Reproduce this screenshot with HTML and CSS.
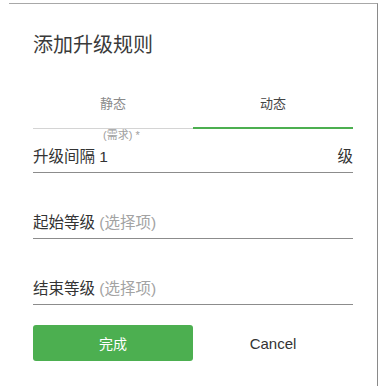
FILE: index.html
```html
<!DOCTYPE html>
<html lang="zh">
<head>
<meta charset="utf-8">
<link rel="stylesheet" href="styles.css">
</head>
<body>
<div class="dialog">
  <h1 class="title">添加升级规则</h1>
  <div class="tabs">
    <div class="tab">静态</div>
    <div class="tab active">动态</div>
  </div>
  <div class="field first">
    <div class="float-label">(需求) *</div>
    <div class="input"><span>升级间隔 1</span><span>级</span></div>
  </div>
  <div class="field second">
    <div class="input"><span>起始等级 <span class="ph">(选择项)</span></span></div>
  </div>
  <div class="field third">
    <div class="input"><span>结束等级 <span class="ph">(选择项)</span></span></div>
  </div>
  <div class="actions">
    <button class="btn primary">完成</button>
    <button class="btn plain">Cancel</button>
  </div>
</div>
</body>
</html>
```
FILE: styles.css
```css
html, body {
  margin: 0;
  padding: 0;
  background: #fff;
}
body {
  font-family: "Liberation Sans", "Noto Sans CJK SC", sans-serif;
  color: #333;
}
.dialog {
  box-sizing: border-box;
  margin: 3px 0 0 9px;
  width: 369px;
  height: 383px;
  border-top: 1px solid #a8a8a8;
  border-right: 1px solid #8a8a8a;
  padding: 27px 24px 0 24px;
}
.title {
  margin: 0;
  font-weight: normal;
  font-size: 20px;
  line-height: 28px;
  color: #3a3a3a;
}
.tabs {
  margin-top: 21px;
  display: flex;
  align-items: flex-end;
}
.tab {
  flex: 1;
  text-align: center;
  font-size: 13px;
  line-height: 20px;
  padding: 14px 0 14px;
  border-bottom: 1px solid #d4d4d4;
  color: #8a8a8a;
}
.tab.active {
  padding-bottom: 13px;
  border-bottom: 2px solid #4caf50;
  color: #444;
}
.field .input {
  display: flex;
  justify-content: space-between;
  font-size: 15.5px;
  line-height: 22px;
  padding-bottom: 4px;
  border-bottom: 1px solid #8c8c8c;
  color: #333;
}
.float-label {
  margin-left: 70px;
  font-size: 11px;
  line-height: 12px;
  color: #a0a0a0;
  margin-bottom: 5px;
}
.field.second {
  margin-top: 39px;
}
.field.third {
  margin-top: 39px;
}
.ph {
  color: #a3a3a3;
}
.actions {
  margin-top: 20px;
  display: flex;
}
.btn {
  flex: 1;
  height: 36px;
  border: none;
  font-family: inherit;
  padding: 0;
  cursor: pointer;
}
.primary {
  background: #4caf50;
  color: #fff;
  border-radius: 3px;
  font-size: 14px;
}
.plain {
  background: transparent;
  color: #333;
  font-size: 15px;
}
```
